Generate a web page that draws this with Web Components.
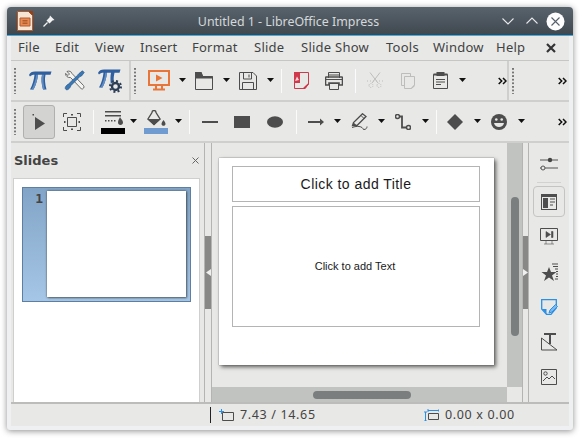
<!DOCTYPE html>
<html lang="en"><head><meta charset="utf-8"><title>Untitled 1 - LibreOffice Impress</title>
<style>
html,body{margin:0;padding:0;background:#fff;height:442px;overflow:hidden}
body{padding:7px 0 0 7px;box-sizing:border-box;font-family:"Noto Sans",sans-serif}
</style></head><body>
<lo-window>
  <lo-titlebar slot="title">Untitled 1 - LibreOffice Impress</lo-titlebar>
  <lo-menubar slot="menu">
    <lo-menu w="37">File</lo-menu><lo-menu w="40">Edit</lo-menu><lo-menu w="45">View</lo-menu><lo-menu w="52">Insert</lo-menu><lo-menu w="62">Format</lo-menu><lo-menu w="47">Slide</lo-menu><lo-menu w="85">Slide Show</lo-menu><lo-menu w="47">Tools</lo-menu><lo-menu w="63">Window</lo-menu><lo-menu w="43">Help</lo-menu>
  </lo-menubar>
  <lo-toolrow slot="tools">
    <lo-section w="120" divider>
      <lo-handle></lo-handle><lo-tool w="35" i="pi"></lo-tool><lo-tool w="35" i="tools"></lo-tool><lo-tool w="35" i="pigear"></lo-tool>
    </lo-section>
    <lo-section w="378" divider>
      <lo-handle></lo-handle><lo-tool w="34" i="show"></lo-tool><lo-tool w="12" i="drop"></lo-tool><lo-tool w="32" i="folder"></lo-tool><lo-tool w="12" i="drop"></lo-tool><lo-tool w="32" i="save"></lo-tool><lo-tool w="12" i="drop"></lo-tool><lo-sep w="11"></lo-sep><lo-tool w="29" i="pdf"></lo-tool><lo-tool w="36" i="print"></lo-tool><lo-sep w="6"></lo-sep><lo-tool w="34" i="cut"></lo-tool><lo-tool w="32" i="copy"></lo-tool><lo-tool w="32" i="paste"></lo-tool><lo-tool w="12" i="drop"></lo-tool><lo-more flush></lo-more>
    </lo-section>
    <lo-section w="60"><lo-handle></lo-handle><lo-more></lo-more></lo-section>
  </lo-toolrow>
  <lo-toolrow slot="tools">
    <lo-section w="558">
      <lo-handle></lo-handle><lo-tool w="34" i="select" active></lo-tool><lo-tool w="32" i="frame"></lo-tool><lo-sep w="10"></lo-sep><lo-tool w="29" i="linecolor"></lo-tool><lo-tool w="13" i="drop"></lo-tool><lo-tool w="32" i="fillcolor"></lo-tool><lo-tool w="12" i="drop"></lo-tool><lo-sep w="10"></lo-sep><lo-tool w="31" i="line"></lo-tool><lo-tool w="33" i="rect"></lo-tool><lo-tool w="33" i="ellipse"></lo-tool><lo-sep w="10"></lo-sep><lo-tool w="29" i="arrow"></lo-tool><lo-tool w="14" i="drop"></lo-tool><lo-tool w="30" i="pencil"></lo-tool><lo-tool w="14" i="drop"></lo-tool><lo-tool w="30" i="connector"></lo-tool><lo-tool w="14" i="drop"></lo-tool><lo-sep w="8"></lo-sep><lo-tool w="30" i="diamond"></lo-tool><lo-tool w="14" i="drop"></lo-tool><lo-tool w="30" i="smile"></lo-tool><lo-tool w="14" i="drop"></lo-tool><lo-more></lo-more>
    </lo-section>
  </lo-toolrow>
  <lo-workspace slot="main">
    <lo-slides slot="left"></lo-slides>
    <lo-splitter slot="split1" dir="left"></lo-splitter>
    <lo-canvas slot="center"></lo-canvas>
    <lo-splitter slot="split2" dir="right"></lo-splitter>
    <lo-sidebar slot="right"></lo-sidebar>
  </lo-workspace>
  <lo-statusbar slot="status"></lo-statusbar>
</lo-window>
<script>
const C='#4d4d4d';
const ICONS={
pi:[24,19,`<path d="M1 4C2 1.500 4 .5 7 .5H23.500L22.500 3.800H17.500C16.500 8 17 13 18.500 18.500H15C13.500 13 13 8 14 3.800H10C9.500 9 8 14 5.500 18.500H2C4.500 14 6 9 6.500 3.800C4.500 3.800 3 4.300 2 5.500Z" fill="#2f5f9e"/><path d="M10 3.800H8.200C7.700 9 6 14 3.500 18.500H5.500C8 14 9.500 9 10 3.800ZM16 3.800H14C13 8 13.500 13 15 18.500H16.800C15.500 13 15 8 16 3.800Z" fill="#5f8cc4"/>`],
tools:[21,21,`<path d="M3 1.500C5 .5 7.500 1.500 8 3.500L19.500 15.500C20.800 17 19.300 19.500 17.500 19L6.500 7.500C4 8 1.300 6 1.500 3.500L4 5.500L5.500 4Z" fill="#f4f4f2" stroke="#5c5c5c" stroke-width=".9"/><path d="M18.500 .8L20.200 2.500L17.500 6L16 6.500L7 15.500C6 18.500 3.500 20.500 2 19.500C.2 18 2 15.300 4.500 14L13.800 5L15 3.500Z" fill="#3a78b5" stroke="#2a5585" stroke-width=".7"/>`],
pigear:[25,24,`<path d="M1 4C2 1.500 4 .5 7 .5H23.500L22.500 3.800H17.500C16.800 7 16.500 9.500 16.800 12L13.800 15C13.300 11 13.300 7 14 3.800H10C9.500 9 8 14 5.500 18.500H2C4.500 14 6 9 6.500 3.800C4.500 3.800 3 4.300 2 5.500Z" fill="#2f5f9e"/><path d="M10 3.800H8.200C7.700 9 6 14 3.500 18.500H5.500C8 14 9.500 9 10 3.800Z" fill="#5f8cc4"/><circle cx="18.500" cy="17.500" r="3.500" fill="none" stroke="#2c3e55" stroke-width="2.400"/><circle cx="18.500" cy="17.500" r="5.500" fill="none" stroke="#2c3e55" stroke-width="2" stroke-dasharray="2 2.300"/>`],
show:[22,22,`<path d="M1 1H21V15H1Z" fill="none" stroke="#e8763a" stroke-width="2"/><path d="M8 4.500L14.500 8L8 11.500Z" fill="#e8763a"/><path d="M8 15V19M14 15V19" stroke="#e8763a" stroke-width="2"/><path d="M5 19.500H17" stroke="#e8763a" stroke-width="2"/>`],
folder:[18,18,`<path d="M.5 2.500V17.500H17.500V4.500H7.500L6 .5H.5Z" fill="none" stroke="${C}"/><path d="M0 0H6.500L8 4H17.500V6.500H0Z" fill="${C}"/>`],
save:[18,18,`<path d="M.5 .5H14L17.500 4V17.500H.5Z" fill="none" stroke="${C}"/><path d="M4.500 1V7H12.500V1M10 2.500V5.500M3.500 17V10.500H14.500V17" fill="none" stroke="${C}"/>`],
pdf:[16,17,`<path d="M.5 .5H14.500V12L11 16.500H.5Z" fill="none" stroke="#d0384c"/><path d="M0 0H6V11H0Z" fill="#d0384c"/><path d="M9.500 15.500L15 10.500V12L11 17H9.500Z" fill="#d0384c"/><path d="M1 9L3 4.500L5 8Z" fill="#f5d5d8"/>`],
print:[18,18,`<path d="M3.500 6V.5H14.500V6M3.500 3H14.500" fill="none" stroke="${C}"/><path d="M1 5H17C17.500 5 17.500 5.500 17.500 6V13H14V11H4V13H.5V6C.5 5.500.5 5 1 5Z" fill="none" stroke="${C}" stroke-width="1.600"/><path d="M4.500 11.500H13.500V17.500H4.500Z" fill="none" stroke="${C}"/><path d="M1 7.500H17" stroke="${C}" stroke-width="1.200"/>`],
cut:[16,17,`<g fill="none" stroke="#bdbdbb"><path d="M3 .5L11 11M13 .5L5 11" /><path d="M2 13.500a2 2 0 1 0 4 0a2 2 0 1 0-4 0M10 13.500a2 2 0 1 0 4 0a2 2 0 1 0-4 0" stroke-dasharray="1 1"/><path d="M0 9H16" stroke-dasharray="1 2"/></g>`],
copy:[14,16,`<g fill="#e8e8e6" stroke="#bdbdbb"><path d="M.5 .5H9.500V12.500H.5Z"/><path d="M3.500 3.500H13.500V12L10.500 15.500H3.500Z"/></g><path d="M9.500 15.500L13.500 11.500V13.500L11 15.500Z" fill="#bdbdbb"/>`],
paste:[15,17,`<path d="M.5 2.500H14.500V16.500H.5Z" fill="none" stroke="${C}"/><path d="M3.500 0H11.500V4H3.500Z" fill="${C}"/><path d="M.5 2.500H14.500" stroke="${C}" stroke-width="2"/><path d="M3 7.500H12M3 10H12M3 12.500H8" stroke="${C}"/>`],
select:[14,18,`<path d="M3 4V17L13 10.500Z" fill="${C}"/><path d="M.5 1H2V2.500H.5Z" fill="${C}"/>`],
frame:[18,18,`<path d="M4.500 4.500H13.500V13.500H4.500Z" fill="none" stroke="${C}"/><path d="M.5 4V.5H4M14 .5H17.500V4M17.500 14V17.500H14M4 17.500H.5V14" fill="none" stroke="${C}"/><path d="M8 1H10V2.500H8ZM8 15.500H10V17H8ZM1 8H2.500V10H1ZM15.500 8H17V10H15.500Z" fill="${C}"/>`],
linecolor:[24,24,`<path d="M4 1H20V2.500H4ZM4 5H20V6.500H4ZM4 10H5.500V11.500H4ZM7 10H8.500V11.500H7ZM10 10H11.500V11.500H10ZM13 10H14.500V11.500H13Z" fill="${C}"/><path d="M19 7C20 9 22 10.500 22 12.500C22 14 21 15 19.500 15C18 15 17 14 17 12.500C17 10.500 18 9 19 7Z" fill="${C}"/><path d="M0 18H24V24H0Z" fill="#000"/>`],
fillcolor:[24,24,`<path d="M8 2.500a2 2 0 1 1 4 0L16 9L10 14.500L4 9Z" fill="none" stroke="${C}" stroke-width="1.300"/><path d="M3 9H17L10 15Z" fill="${C}"/><path d="M19.500 10C20.500 11.500 21.500 12.500 21.500 14C21.500 15 20.500 15.800 19.500 15.800C18.500 15.800 17.500 15 17.500 14C17.500 12.500 18.500 11.500 19.500 10Z" fill="${C}"/><path d="M0 18H24V24H0Z" fill="#6f9bd1"/>`],
line:[16,2,`<path d="M0 0H16V2H0Z" fill="${C}"/>`],
rect:[16,12,`<path d="M0 0H16V12H0Z" fill="${C}"/>`],
ellipse:[16,12,`<ellipse cx="8" cy="6" rx="8" ry="5.800" fill="${C}"/>`],
arrow:[16,8,`<path d="M0 3H12V0.500L16 4L12 7.500V5H0Z" fill="${C}"/>`],
pencil:[17,17,`<path d="M11.500 .7L15 3.500L6 12.500H1.500L2.500 9.500Z" fill="none" stroke="${C}" stroke-width="1.300"/><path d="M1.500 12.500L2.500 9.500L6 12.500Z" fill="${C}"/><path d="M10 2.500L13.500 6" stroke="${C}"/><path d="M1 14.500C5 13 9 13 11 14.500C12.500 15.500 11.500 16.500 13 16.500C15 16.500 16 15 16 13.500" fill="none" stroke="${C}" stroke-width="1"/>`],
connector:[16,16,`<circle cx="2.500" cy="2.500" r="2" fill="none" stroke="${C}" stroke-width="1.500"/><circle cx="13.500" cy="13.500" r="2" fill="none" stroke="${C}" stroke-width="1.500"/><path d="M4.500 2.500H7V13.500H11.500" fill="none" stroke="${C}" stroke-width="1.800"/>`],
diamond:[16,16,`<path d="M8 0L16 8L8 16L0 8Z" fill="${C}"/>`],
smile:[16,16,`<circle cx="8" cy="8" r="8" fill="${C}"/><circle cx="5.300" cy="5.500" r="1.300" fill="#e8e8e6"/><circle cx="10.700" cy="5.500" r="1.300" fill="#e8e8e6"/><path d="M3 9H13C12.500 11.500 10.500 13 8 13C5.500 13 3.500 11.500 3 9Z" fill="#e8e8e6"/>`],
drop:[7,4,`<path d="M0 0H7L3.500 4Z" fill="#111"/>`]
};
function svg(name,extra=''){const [w,h,b]=ICONS[name];return `<svg width="${w}" height="${h}" viewBox="0 0 ${w} ${h}" ${extra} style="display:block">${b}</svg>`;}
function el(name,css,html,init){customElements.define(name,class extends HTMLElement{constructor(){super();this.attachShadow({mode:'open'}).innerHTML=`<style>${css}</style>${html}`;}connectedCallback(){if(init)init(this);}});}

el('lo-window',`:host{display:flex;flex-direction:column;width:566px;height:423px;background:#eff0f1;border-radius:4px 4px 3px 3px;box-shadow:0 1px 6px rgba(0,0,0,.45);overflow:hidden}
.in{flex:1;display:flex;flex-direction:column;margin:0 4px 4px;min-height:0;background:#e8e8e6}`,
`<slot name="title"></slot><div class="in"><slot name="menu"></slot><slot name="tools"></slot><slot name="main"></slot><slot name="status"></slot></div>`);

el('lo-titlebar',`:host{display:flex;align-items:center;height:28px;flex:none;background:linear-gradient(#59636c,#3f484f);border-bottom:1px solid #3daee9;color:#d5d8da;font:12.400px "Noto Sans",sans-serif;position:relative}
.l{width:60px;display:flex;align-items:center;gap:10px;padding-left:10px;box-sizing:border-box}
.t{flex:1;text-align:center;padding-left:10px}
.r{width:73px;display:flex;align-items:center;justify-content:flex-end;padding-right:8px;box-sizing:border-box}`,
`<div class="l"><svg width="16" height="20" viewBox="0 0 16 20" style="display:block"><path d="M.5.5H11.500L15.500 4.500V19.500H.5Z" fill="#f7e5d4" stroke="#b65a2a"/><path d="M11 0H16V5Z" fill="#9a3f14"/><path d="M3 7H13V15H3Z" fill="#e58a55" stroke="#b65a2a"/><path d="M5.500 9.500H10.500M5.500 11H10.500M5.500 12.500H10.500" stroke="#a74f20" stroke-width=".8"/></svg><svg width="12" height="12" viewBox="0 0 12 12" style="display:block"><path d="M7 .5L11.500 5L9.500 5.500L6.500 8.500L3.500 5.500L6.500 2.500Z" fill="#f2f2f2"/><path d="M.5 11.500L4.500 7.500" stroke="#f2f2f2" stroke-width="1.200"/></svg></div><div class="t"><slot></slot></div><div class="r"><svg width="14" height="14" viewBox="0 0 14 14" style="margin-right:10px"><path d="M1.500 4.500L7 10L12.500 4.500" fill="none" stroke="#e4e6e8" stroke-width="1.100"/></svg><svg width="14" height="14" viewBox="0 0 14 14" style="margin-right:7.500px"><path d="M1.500 9.500L7 4L12.500 9.500" fill="none" stroke="#e4e6e8" stroke-width="1.100"/></svg><svg width="19" height="19" viewBox="0 0 19 19"><circle cx="9.500" cy="9.500" r="9" fill="#fdfdfd"/><path d="M5.500 5.500L13.500 13.500M13.500 5.500L5.500 13.500" stroke="#56606a" stroke-width="1.100"/></svg></div>`);

el('lo-menubar',`:host{display:flex;align-items:center;height:25px;flex:none;box-sizing:border-box;color:#3f4243;font:13px "Noto Sans",sans-serif;letter-spacing:.25px;border-bottom:1px solid #c6c6c4;padding-bottom:2px}
svg{display:block;margin-left:auto;margin-right:13px;position:relative;top:1px}`,
`<slot></slot><svg width="10" height="10" viewBox="0 0 10 10"><path d="M1 1L9 9M9 1L1 9" stroke="#333" stroke-width="2.200"/></svg>`);
el('lo-menu',`:host{display:block;box-sizing:border-box;padding-left:7px;flex:none;white-space:nowrap}`,`<slot></slot>`,h=>{h.style.width=h.getAttribute('w')+'px'});

el('lo-toolrow',`:host{display:flex;height:41px;flex:none;box-sizing:border-box;border-bottom:2px solid #cfcfcd}`,`<slot></slot>`);
el('lo-section',`:host{display:flex;align-items:center;box-sizing:border-box;flex:none;height:100%}
:host([divider]){border-right:2px solid #cfcfcd}`,`<slot></slot>`,h=>{h.style.width=h.getAttribute('w')+'px'});
el('lo-handle',`:host{display:block;width:11px;height:26px;flex:none;background:radial-gradient(circle at 1px 1px,#777 0 .9px,transparent 1px) 3px 0/2px 3.600px repeat-y}`,``);
el('lo-sep',`:host{display:flex;justify-content:center;flex:none;height:100%;align-items:center}i{display:block;width:1px;height:24px;background:#fbfbfb}`,`<i></i>`,h=>{h.style.width=h.getAttribute('w')+'px'});
el('lo-tool',`:host{display:flex;align-items:center;justify-content:center;flex:none;height:34px;box-sizing:border-box}
:host([active]){background:#d3d3d1;border:1px solid #b0b0ae;border-radius:3px;margin:0 1px;}`,`<span id="s"></span>`,h=>{
  const i=h.getAttribute('i');h.shadowRoot.getElementById('s').innerHTML=svg(i);
  let w=+h.getAttribute('w');if(h.hasAttribute('active'))w-=2;h.style.width=w+'px';
  if(i==='drop')h.style.marginTop='-2px';
});
el('lo-more',`:host{display:block;margin-left:auto;margin-right:2px;width:9px;flex:none}:host([flush]){margin-right:0}`,`<svg width="9" height="8" viewBox="0 0 9 8" style="display:block"><path d="M.7 1L3.700 4L.7 7M5 1L8 4L5 7" fill="none" stroke="#111" stroke-width="1.500"/></svg>`);

el('lo-workspace',`:host{display:grid;grid-template-columns:193px 8px 310px 7px 40px;flex:1;min-height:0;border-bottom:2px solid #bcbcba;box-sizing:border-box}`,
`<slot name="left"></slot><slot name="split1"></slot><slot name="center"></slot><slot name="split2"></slot><slot name="right"></slot>`);

el('lo-slides',`:host{display:flex;flex-direction:column;min-height:0}
.h{display:flex;align-items:center;justify-content:space-between;height:35px;padding:0 5px 0 3px;flex:none;color:#444;font:bold 13px "DejaVu Sans",sans-serif}
.h svg{display:block}
.list{flex:1;margin:0 4px 0 2px;background:#fff;border:1px solid #cfcfcd;border-bottom:0;padding:8px 8px 0 8px;min-height:0}
.sel{display:flex;height:115px;box-sizing:border-box;background:linear-gradient(#82a4c6,#a5c6e6);border:1px solid #5e7f9f;padding:3px 4px 4px 0}
.n{width:24px;text-align:right;padding-right:4px;box-sizing:border-box;font:bold 13px "DejaVu Sans Mono","DejaVu Sans",monospace;color:#444;line-height:13px;padding-top:1px}
.th{flex:1;background:#fff;box-shadow:0 0 2px rgba(40,40,40,.7),1px 1px 2px rgba(40,40,40,.5)}`,
`<div class="h"><span>Slides</span><svg width="7" height="7" viewBox="0 0 7 7"><path d="M.5.5L6.500 6.500M6.500.5L.5 6.500" stroke="#666"/></svg></div><div class="list"><div class="sel"><div class="n">1</div><div class="th"></div></div></div>`);

el('lo-splitter',`:host{display:flex;align-items:center;box-sizing:border-box;border-left:1px solid #b4b4b2;border-right:1px solid #b4b4b2}
.g{width:100%;height:73px;background:#888886;display:flex;align-items:center;justify-content:center}`,
`<div class="g"><svg width="5" height="7" viewBox="0 0 5 7"><path id="p" d="M5 0V7L0 3.500Z" fill="#f0f0f0"/></svg></div>`,h=>{
 if(h.getAttribute('dir')==='right')h.shadowRoot.getElementById('p').setAttribute('d','M0 0V7L5 3.500Z');});

el('lo-canvas',`:host{display:grid;grid-template-columns:1fr 15px;grid-template-rows:1fr 15px;min-height:0;min-width:0;background:#e8e8e6}
.area{padding:15px 12px 0 7px;min-height:0;overflow:hidden}
.page{width:275px;height:207px;background:#fff;box-sizing:border-box;box-shadow:0 0 1px #555,2px 2px 4px rgba(0,0,0,.6);padding:8px 14px 0 13px;display:flex;flex-direction:column;gap:4px;color:#1a1a1a}
.ph{border:1px solid #b4b4b4;display:flex;align-items:center;justify-content:center;font-family:"Liberation Sans",sans-serif}
.t{height:36px;font-size:14px;letter-spacing:.45px;box-sizing:border-box}.c{height:121px;font-size:11px;box-sizing:border-box;padding:0 2px 1px 0}
.v{background:#c1c3c1;display:flex;justify-content:center}.v i{display:block;width:8px;margin-top:54px;height:139px;border-radius:4px;background:#7a7e7e}
.h{background:#c1c3c1;padding:4px 0 0 101px}.h i{display:block;width:98px;height:8px;border-radius:4px;background:#7a7e7e}
.k{background:#e8e8e6}`,
`<div class="area"><div class="page"><div class="ph t">Click to add Title</div><div class="ph c">Click to add Text</div></div></div><div class="v"><i></i></div><div class="h"><i></i></div><div class="k"></div>`);

const SB=[
 ['<path d="M0 3H18M0 11H18" stroke="#555"/><circle cx="10" cy="3" r="2.200" fill="#444"/><circle cx="3" cy="11" r="2" fill="#e8e8e6" stroke="#555"/>',18,14],
 ['<path d="M0 0H16V16H0Z" fill="#4d4d4d"/><path d="M1 3H15V15H1Z" fill="#e8e8e6"/><path d="M2 4H7V14H2Z" fill="#4d4d4d"/><path d="M9 5H14M9 8H14M9 11H12" stroke="#4d4d4d"/>',16,16],
 ['<path d="M.5.5H17.500V12.500H.5Z" fill="none" stroke="#4d4d4d"/><path d="M6 3.500L10.500 6.500L6 9.500ZM11.500 3.500H13V9.500H11.500ZM6 13V16M12 13V16M4 16H14" fill="#4d4d4d" stroke="#4d4d4d" stroke-width=".6"/>',18,17],
 ['<path d="M8 4L10 9H15.500L11 12.500L13 18L8 14.500L3 18L5 12.500L.5 9H6Z" fill="#4d4d4d"/><path d="M11 1H17M12 3.500H17M14 6H17M15 8.500H17M15 11H17M15 13.500H17M14 16H17" stroke="#4d4d4d"/>',17,18],
 ['<path d="M.7.7H15.300V9L10 15.300H5.500L.7 10Z" fill="none" stroke="#2b8fe6" stroke-width="1.300"/><path d="M1 10H5.500V15Z" fill="#2b8fe6"/><path d="M8 14L9 11L14.500 5.500L16.500 7.500L11 13Z" fill="#7ab8ef" stroke="#2b8fe6"/>',17,16],
 ['<path d="M3 1H15M9 1V11" stroke="#4d4d4d" stroke-width="2"/><path d="M.5 5V17H16L.5 5ZM.5 17" fill="none" stroke="#4d4d4d"/>',16,18],
 ['<path d="M.5.5H15.500V15.500H.5Z" fill="none" stroke="#4d4d4d"/><circle cx="4.500" cy="4.500" r="1.700" fill="none" stroke="#4d4d4d"/><path d="M2 12L6 8L8 10L11 7L14 10" fill="none" stroke="#4d4d4d"/>',16,16]
];
el('lo-sidebar',`:host{display:flex;flex-direction:column;align-items:center;padding-top:3px;min-height:0;box-sizing:border-box}
.b{display:flex;align-items:center;justify-content:center;flex:none;width:32px;height:35px}
.sep{width:24px;height:1px;background:#d2d2d0;flex:none;margin-top:1px;margin-bottom:3px}
.on{height:31px;border:1px solid #c4c4c2;border-radius:4px;box-sizing:border-box;margin-bottom:2px}
svg{display:block}`,
SB.map((s,i)=>{const g=`<div class="b${i==1?' on':''}"><svg width="${s[1]}" height="${s[2]}" viewBox="0 0 ${s[1]} ${s[2]}">${s[0]}</svg></div>`;return i==0?g+'<div class="sep"></div>':g}).join(''));

el('lo-statusbar',`:host{display:grid;grid-template-columns:199px 214px 1fr;align-items:center;height:21px;margin-bottom:1px;flex:none;color:#444;font:12.500px "Noto Sans",sans-serif;letter-spacing:.65px;box-sizing:border-box}
.c{display:flex;align-items:center;gap:6px;white-space:nowrap;height:100%}
.bar{border-left:1px solid #222;height:16px;padding-left:8px}
svg{display:block}`,
`<div></div><div class="c bar"><svg width="15" height="12" viewBox="0 0 15 12"><path d="M3.500 3.500H14.500V11.500H3.500" fill="none" stroke="#4d4d4d"/><path d="M3.500 3.500V11.500" stroke="#4d4d4d"/><path d="M0 2.500H5M2.500 0V5" stroke="#2b8fe6"/></svg><span>7.43 / 14.65</span></div><div class="c"><svg width="15" height="12" viewBox="0 0 15 12"><path d="M4.500 4.500H14.500V10.500H4.500Z" fill="none" stroke="#4d4d4d"/><path d="M4 1.500H15M4 0V3M15 0V3M1.500 3V12M0 3H3M0 12H3" stroke="#2b8fe6"/></svg><span>0.00 x 0.00</span></div>`);
</script>
</body></html>
